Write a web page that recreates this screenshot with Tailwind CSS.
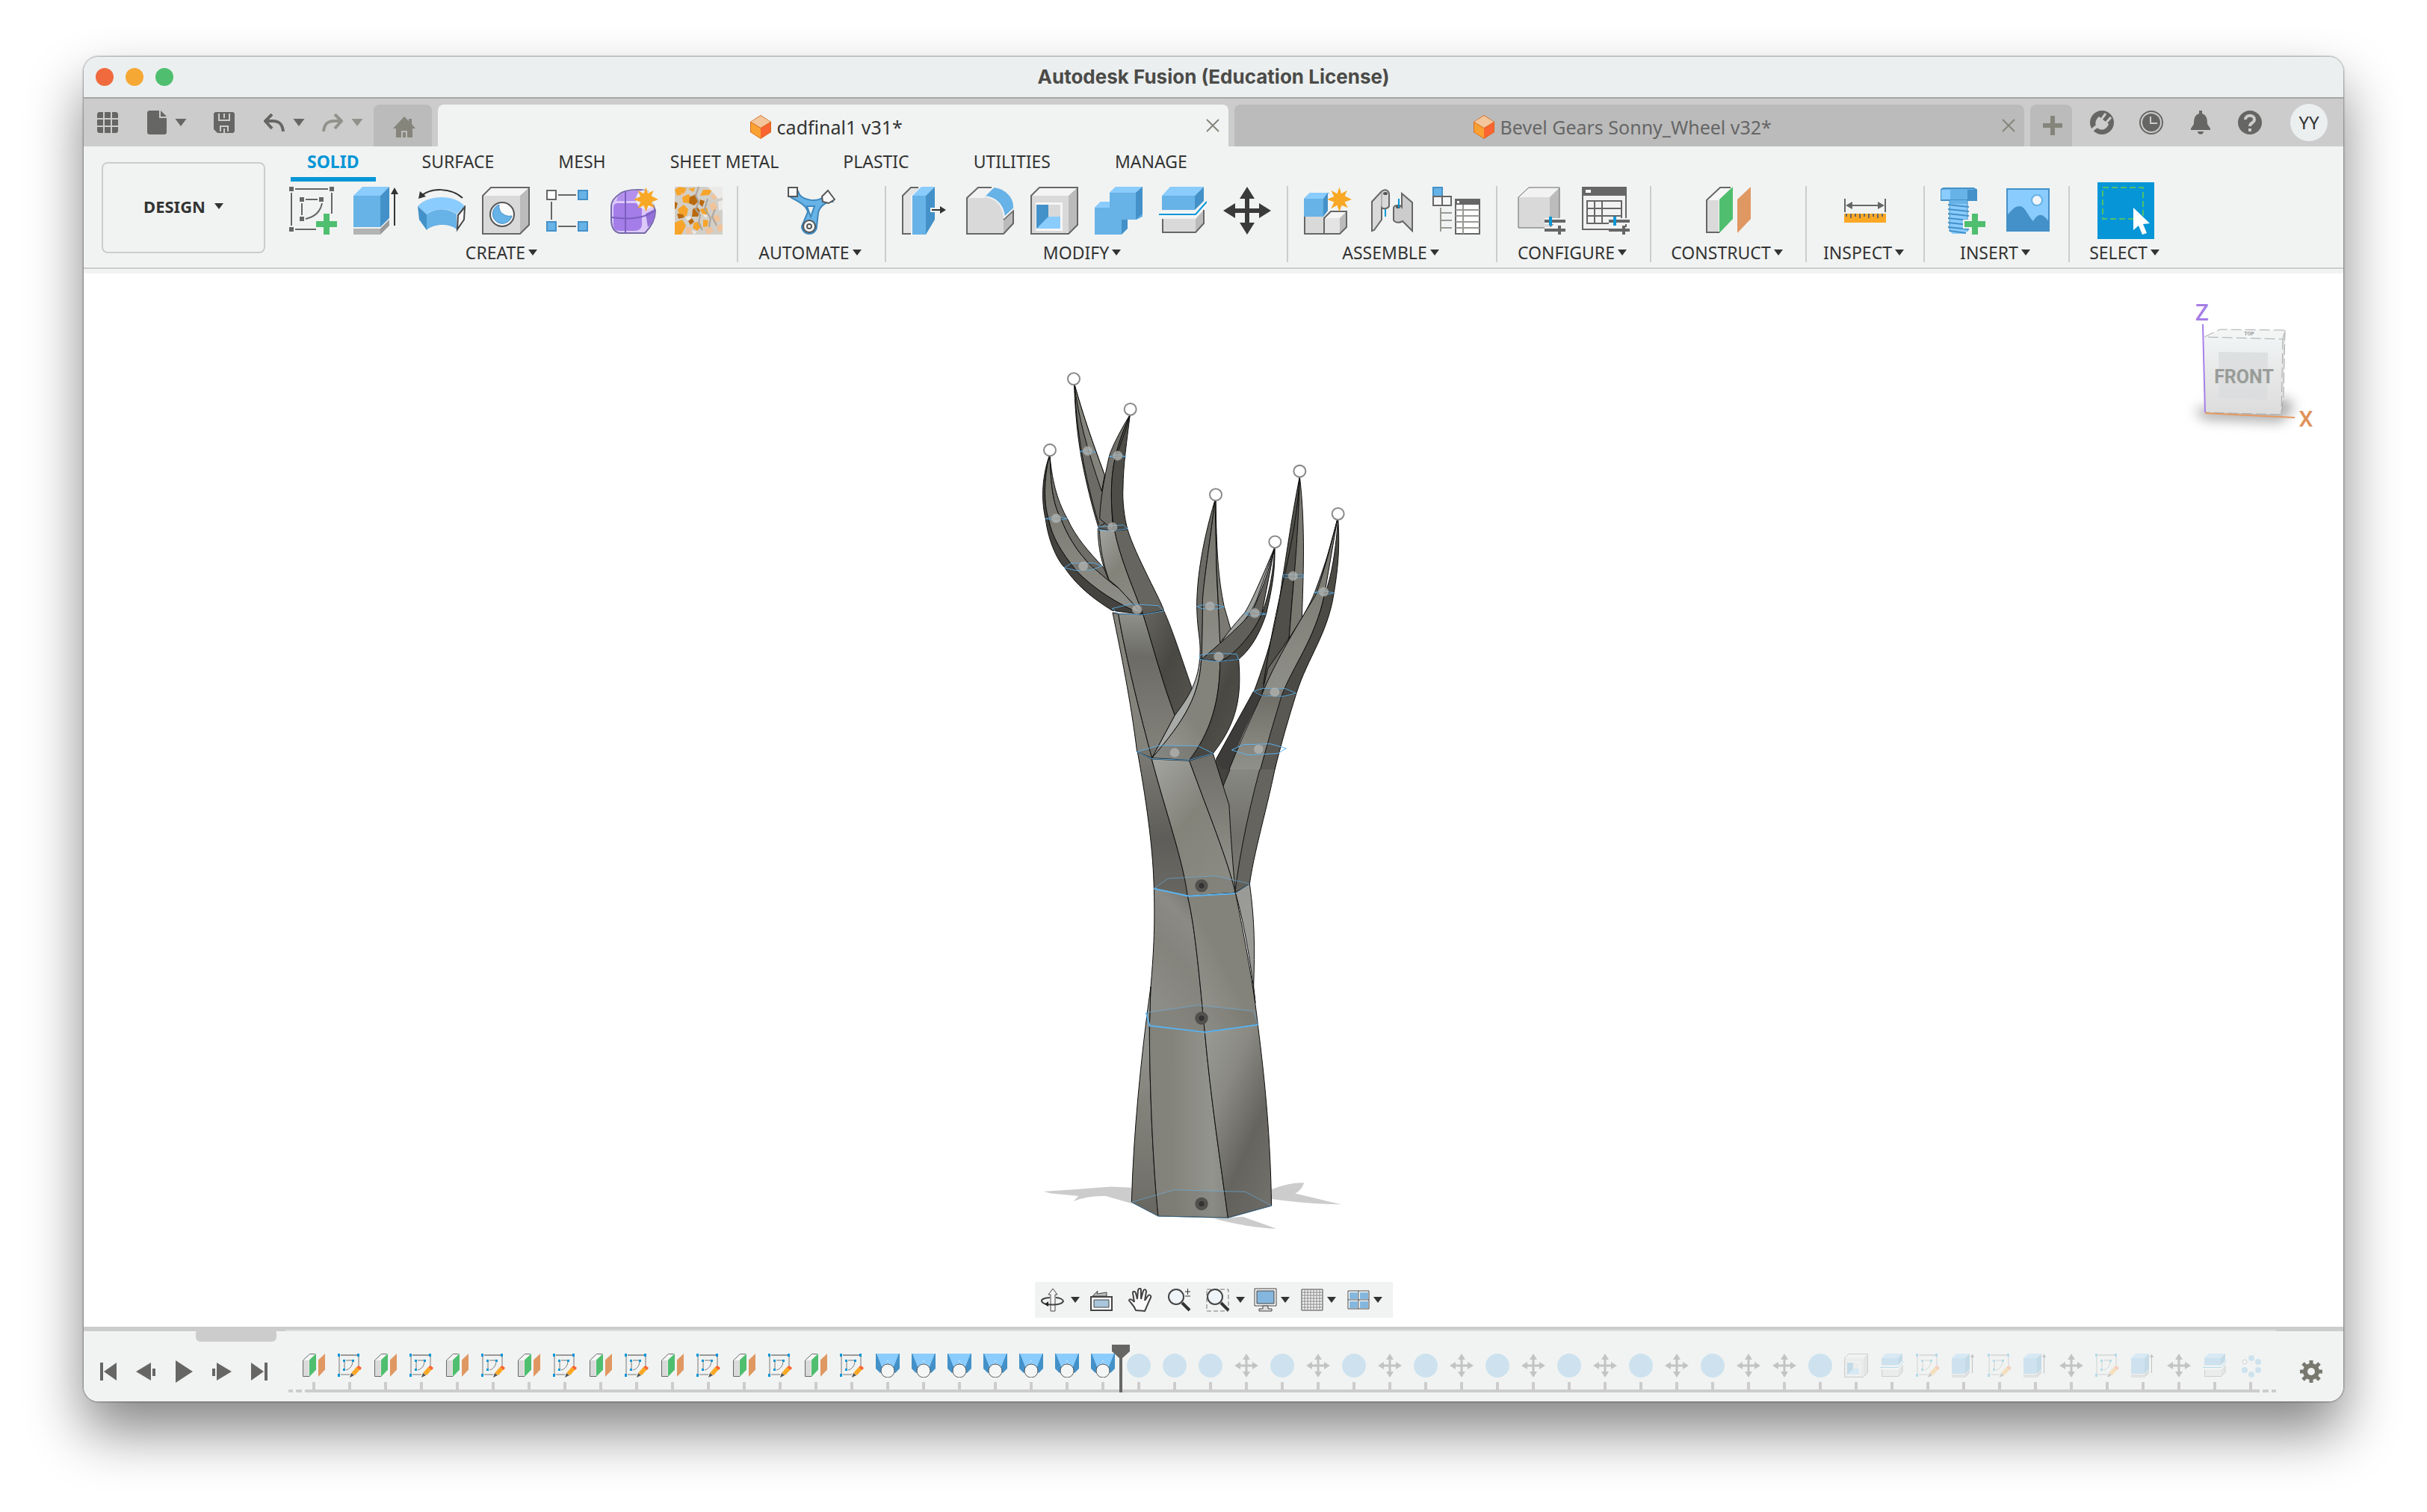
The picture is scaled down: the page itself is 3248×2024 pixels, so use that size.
<!DOCTYPE html>
<html lang="en">
<head>
<meta charset="utf-8">
<title>Autodesk Fusion (Education License)</title>
<script src="https://cdn.jsdelivr.net/npm/@tailwindcss/browser@4"></script>
</head>
<body class="min-h-screen bg-white flex flex-col pt-[76px] pb-[148px] px-28 font-['Noto_Sans','Open_Sans',sans-serif] text-[#333]">

<svg class="hidden" aria-hidden="true">
  <defs>
    <symbol id="caret" viewBox="0 0 12 8"><path d="M0 0h12L6 8z" fill="currentColor"/></symbol>
    <symbol id="star" viewBox="0 0 32 32"><path d="M16 0l2.500 8.500L26 4l-3 7.500 9 4.500-9 3.500L27 27l-8-3.500L16 32l-3-8.500L5 28l4-8.500-9-3.500 9-4L5 4l8 4.500z" fill="#f9a825"/></symbol>
    <symbol id="plus-badge" viewBox="0 0 28 28"><path d="M10 0h8v10h10v8H18v10h-8V18H0v-8h10z" fill="#4fbf6f"/></symbol>
    <symbol id="doc-cube" viewBox="0 0 28 32"><path d="M14 0l14 9v14l-14 9L0 23V9z" fill="#d86a1c"/><path d="M14 1l13 8-13 8L1 9z" fill="#f3c69c"/><path d="M1 10l13 8v13L1 23z" fill="#f9a133"/><path d="M27 10l-13 8v13l13-8z" fill="#fa6432"/></symbol>

    <symbol id="sketch" viewBox="0 0 64 64"><g fill="#666"><path d="M0 0h6v6H0zM54 0h6v6h-6zM0 54h6v6H0zM14 14h6v6h-6zM40 14h6v6h-6zM14 40h6v6h-6z"/></g><path d="M8 3h44M3 8v44M57 8v28M8 57h28M22 17h16M17 22v16M44 22c-2 10-8 18-22 21" fill="none" stroke="#666" stroke-width="2"/><use href="#plus-badge" x="36" y="36" width="28" height="28"/></symbol>
    <symbol id="extrude" viewBox="0 0 64 64"><path d="M0 12L12 0h36L36 12z" fill="#8accfd"/><path d="M0 12h36v42H0z" fill="#67b2e6"/><path d="M36 12L48 0v42L36 54z" fill="#4391c8"/><path d="M0 56h36v8H0z" fill="#b3b3b3"/><path d="M36 56l12-12v8L36 64z" fill="#999"/><path d="M55 6v46" stroke="#333" stroke-width="2"/><path d="M55 1l5 9H50z" fill="#333"/></symbol>
    <symbol id="revolve" viewBox="0 0 64 64"><path d="M0 26C14 10 50 10 63 26L52 37C44 28 22 28 12 37z" fill="#8accfd"/><path d="M12 37c12-9 28-9 40 0v20c-10-8-30-8-40 1z" fill="#67b2e6"/><path d="M0 26l12 11v21L2 44z" fill="#4391c8"/><path d="M63 27l-9 11-1 19 9-13z" fill="#f8f8f8" stroke="#444" stroke-width="2"/><path d="M60 15C44 1 18 1 5 12" fill="none" stroke="#333" stroke-width="2"/><path d="M1 16L3 6l8 7z" fill="#333"/></symbol>
    <symbol id="box" viewBox="0 0 64 64"><path d="M1 12L12 1h51L51 12z" fill="#f4f4f4"/><path d="M1 12h50v51H1z" fill="#d9d9d9"/><path d="M51 12L63 1v50L51 63z" fill="#bbb"/><path d="M1 12L12 1h51v50L51 63H1z" fill="none" stroke="#666" stroke-width="2"/></symbol>
    <symbol id="hole" viewBox="0 0 64 64"><use href="#box"/><circle cx="27" cy="37" r="16" fill="#fafafa" stroke="#555" stroke-width="2"/><path d="M23 24a13 13 0 1 0 17 15C31 41 21 34 23 24z" fill="#67b2e6" stroke="#4391c8"/></symbol>
    <symbol id="pattern" viewBox="0 0 64 64"><path d="M1 5h12v12H1z" fill="#fff" stroke="#666" stroke-width="2"/><path d="M43 5h12v12H43zM1 47h12v12H1zM43 47h12v12H43z" fill="#67b2e6" stroke="#4391c8" stroke-width="2"/><path d="M16 11h24M7 20v24M16 53h24" stroke="#666" stroke-width="2"/></symbol>
    <symbol id="form" viewBox="0 0 64 64"><path d="M13 9c9-6 30-6 38-3l9 26c0 14-8 24-14 30H12C4 60 1 54 1 44V26c0-7 6-13 12-17z" fill="#dcc9fa" stroke="#756aa8" stroke-width="2"/><path d="M10 12c8-6 20-8 28-7l-4 14H8z" fill="#b391ec"/><path d="M10 22h24c6 0 8 2 8 8v20c0 6-4 9-10 9H12c-6 0-8-3-8-9V28c0-4 2-6 6-6z" fill="#a47de8"/><path d="M47 36l12-6c1 12-2 18-9 24z" fill="#9471d8"/><path d="M20 6v56M2 41c20 3 44 2 57-9" fill="none" stroke="#7b5fc0" stroke-width="2"/><circle cx="47" cy="17" r="13" fill="#eff2f2" opacity=".8"/><use href="#star" x="31" y="0" width="33" height="34"/></symbol>
    <symbol id="texture" viewBox="0 0 64 64"><path d="M0 0h64v64H0z" fill="#d2cec8"/><path d="M0 4l6-4 10 2-4 8-9 2zM10 14l8-4 6 5-5 7-8-1zM34 12l4-8 12 0-4 7zM18 3l9-2-2 6zM4 30l8-6 6 6-2 9-9 2zM0 48l10-4 5 8-6 12H0zM34 30l9-2 2 8-7 3zM26 48l7-1 3 6-6 6-6-4zM38 44l7 1-1 8-6 1z" fill="#f6a52a"/><path d="M20 14l8-4 4 9-6 6-7-3zM24 30l6-3 4 5-3 8-8 0zM3 36l8 1 2 4-8 2zM34 17l6 2-3 8-4-4zM18 46l5-4 3 5-5 4zM0 20l4 2-2 7-2 1z" fill="#b9690e"/><path d="M46 24l7-4 4 8-6 6zM50 40l8-3 3 8-8 4zM40 56l8-3 4 7-8 4zM15 54l7 1 1 8h-8zM48 12l6-3 3 5-5 4zM56 52l8-2v9l-6 1zM8 8l6 1-3 4z" fill="#f0c39b"/><path d="M44 0h20v14l-6 2-5-6zM36 36l8 2-2 4zM58 20l6-2v12l-5 2zM22 58l8 2-4 4zM14 41l6-2 2 4-5 2z" fill="#eceae8"/><path d="M32 0l-4 12 4 8-4 10 6 8-2 10 5 10M44 16l-4 14 8 12-2 12M54 30l-4 10 6 12" fill="none" stroke="#aaa49c" stroke-width="2"/></symbol>

    <symbol id="automate" viewBox="0 0 64 64"><path d="M4 8l10-2c3 13 28 16 36 6l10 8c-9 0-17 6-19 15l-2 18a9 9 0 1 1-20 0L27 34C25 24 14 20 4 14z" fill="#67b2e6" stroke="#3e87bd" stroke-width="2"/><path d="M26 26h10l-5 14z" fill="#eff2f2" stroke="#3e87bd" stroke-width="2"/><path d="M1 1h12v12H1zM54 5l9 12-8 5-8-2-1-7z" fill="#f8f8f8" stroke="#555" stroke-width="2"/><circle cx="29" cy="53" r="8" fill="#f8f8f8" stroke="#555" stroke-width="2"/><circle cx="29" cy="53" r="3" fill="none" stroke="#555" stroke-width="2"/></symbol>

    <symbol id="presspull" viewBox="0 0 64 64"><path d="M1 12L12 1h12L12 12v51H1z" fill="#e4e4e4"/><path d="M12 63H1V12L12 1h10" fill="none" stroke="#666" stroke-width="2"/><path d="M14 12L26 0h18L32 12z" fill="#8accfd"/><path d="M14 12h18v52H14z" fill="#67b2e6"/><path d="M32 12L44 0v44L32 64z" fill="#4391c8"/><path d="M38 28h20v6H38z" fill="#eff2f2"/><path d="M40 31h14" stroke="#333" stroke-width="2"/><path d="M59 31l-8-5v10z" fill="#333"/></symbol>
    <symbol id="fillet" viewBox="0 0 64 64"><path d="M1 15L16 1h20L25 14C40 14 50 24 50 42l13-10v16L50 63H1z" fill="#d9d9d9"/><path d="M1 15L16 1h20L24 15z" fill="#f2f2f2"/><path d="M50 42l13-10v16L50 63z" fill="#bbb"/><path d="M50 44l13-12v17L50 63H1V15L16 1h18" fill="none" stroke="#666" stroke-width="2"/><path d="M37 0c18 2 28 16 27 29L51 41C50 24 39 14 24 13z" fill="#67b2e6" stroke="#eff2f2" stroke-width="2"/></symbol>
    <symbol id="shell" viewBox="0 0 64 64"><use href="#box"/><path d="M7 21h36v38H7z" fill="#f6f6f6"/><path d="M8 24h16v16h16v16H8z" fill="#67b2e6"/><path d="M24 40H40v16H8l16-16z" fill="#8accfd"/><path d="M8 24h16v16L8 56z" fill="#4391c8"/><path d="M24 24h16v16H24z" fill="#d9d9d9"/></symbol>
    <symbol id="combine" viewBox="0 0 64 64"><path d="M20 8l8-8h36v40L56 44H44L36 64H0V28l8-8h12z" fill="#67b2e6"/><path d="M20 8l8-8h36l-9 8zM0 28l8-8h12v8z" fill="#8accfd"/><path d="M55 8l9-8v36l-9 8zM36 44h8v12l-8 8z" fill="#4391c8"/></symbol>
    <symbol id="split" viewBox="0 0 64 64"><path d="M4 12L15 0h45L48 12z" fill="#8accfd"/><path d="M4 12h44v19H4z" fill="#67b2e6"/><path d="M48 12L60 0v19L48 31z" fill="#4391c8"/><path d="M5 43h44v18H5z" fill="#d9d9d9"/><path d="M49 43l11-12v18L49 61z" fill="#bbb"/><path d="M5 43v18h44l11-12V31" fill="none" stroke="#666" stroke-width="2"/><path d="M0 37h49l15-17" fill="none" stroke="#f6f6f6" stroke-width="7"/><path d="M0 37h49l15-17" fill="none" stroke="#0696d7" stroke-width="2"/></symbol>
    <symbol id="move" viewBox="0 0 64 64"><path d="M32 0l10 16h-7v13h13v-7l16 10-16 10v-7H35v13h7L32 64 22 48h7V35H16v7L0 32l16-10v7h13V16h-7z" fill="#3a3a3a"/></symbol>

    <symbol id="component" viewBox="0 0 64 64"><path d="M1 40h26v23H1z" fill="#d9d9d9"/><path d="M27 42l9-9h21L48 42v21H27z" fill="#e4e4e4"/><path d="M27 42l9-9h21l-9 9z" fill="#f6f6f6"/><path d="M48 42l9-9v21l-9 9z" fill="#bbb"/><path d="M1 40v23h47l9-9V33H36l-9 9v21" fill="none" stroke="#666" stroke-width="2"/><path d="M0 16l8-8h26l-8 8v24H0z" fill="#67b2e6"/><path d="M0 16l8-8h24l-6 8z" fill="#8accfd"/><path d="M26 16l6-8v24l-6 8z" fill="#4391c8"/><circle cx="48" cy="17" r="14" fill="#eff2f2"/><use href="#star" x="31" y="0" width="33" height="34"/></symbol>
    <symbol id="joint" viewBox="0 0 64 64"><path d="M5 20L18 6c6-4 10 0 10 4v16c-2 4-8 4-10 2v16L8 58l-3 1z" fill="#d9d9d9" stroke="#666" stroke-width="2"/><path d="M18 6v22" stroke="#888"/><ellipse cx="23" cy="9" rx="3" ry="2" fill="#555"/><path d="M45 9l14 12v38L46 46l-2 1c-4 2-10 0-10-3V28c1-4 9-4 11-1z" fill="#ccc" stroke="#666" stroke-width="2"/><ellipse cx="40" cy="27" rx="3" ry="2" fill="#555"/><path d="M23 30v10M41 16v12" stroke="#0696d7" stroke-width="2"/></symbol>
    <symbol id="bom" viewBox="0 0 64 64"><path d="M1 1h12v12H1z" fill="#67b2e6" stroke="#4391c8" stroke-width="2"/><path d="M1 13h24v12H1zM13 13v12" fill="#f6f6f6" stroke="#666" stroke-width="2"/><path d="M11 28v32M11 35h15M11 45h15M11 55h15" stroke="#999994" stroke-width="2" fill="none"/><path d="M31 17h32v46H31z" fill="#fff" stroke="#666" stroke-width="2"/><path d="M30 16h34v8H30z" fill="#666"/><path d="M33 19h3v3h-3z" fill="#fff"/><path d="M31 31h32M31 39h32M31 47h32M31 55h32M41 24v39" stroke="#999994" stroke-width="2"/></symbol>

    <symbol id="sliders" viewBox="0 0 28 24"><path d="M0 6h28M0 18h28" stroke="#eff2f2" stroke-width="8"/><path d="M0 6h28M0 18h28" stroke="#666" stroke-width="4"/><path d="M8 0v12" stroke="#0696d7" stroke-width="4"/><path d="M20 12v12" stroke="#666" stroke-width="4"/></symbol>
    <symbol id="config" viewBox="0 0 64 64"><path d="M1 14L15 1h41L43 14z" fill="#f2f2f2"/><path d="M1 14h42v41H1z" fill="#d9d9d9"/><path d="M43 14L56 1v40L43 55z" fill="#bbb"/><path d="M1 14L15 1h41v40L43 55H1z" fill="none" stroke="#666" stroke-width="1"/><use href="#sliders" x="36" y="40" width="28" height="24"/></symbol>
    <symbol id="config-table" viewBox="0 0 64 64"><path d="M1 1h58v56H1z" fill="#f2f2f2" stroke="#666" stroke-width="2"/><path d="M0 0h60v12H0z" fill="#666"/><path d="M5 4h7v4H5z" fill="#fff"/><path d="M7 19h46v30H7zM7 29h46M7 39h46M17 19v30M27 19v30" fill="none" stroke="#666" stroke-width="2"/><use href="#sliders" x="36" y="40" width="28" height="24"/></symbol>

    <symbol id="plane" viewBox="0 0 64 64"><path d="M3 18L21 1h14L19 18z" fill="#f6f6f6"/><path d="M3 18h16v43H3z" fill="#dadada"/><path d="M35 1H21L3 18v43h17" fill="none" stroke="#666" stroke-width="2"/><path d="M20 17L38 0v43L20 62z" fill="#4fbf6f"/><path d="M44 17L62 0v43L44 62z" fill="#e09862"/></symbol>
    <symbol id="measure" viewBox="0 0 64 64"><path d="M5 16v18M59 16v18M8 25h48" stroke="#666" stroke-width="2"/><path d="M6 25l9-5v10zM58 25l-9-5v10z" fill="#666"/><path d="M4 36h56v12H4z" fill="#f9a825"/><path d="M7 36v4M13 36v6M19 36v4M25 36v6M31 36v4M37 36v6M43 36v4M49 36v6M55 36v4" stroke="#666" stroke-width="2"/></symbol>
    <symbol id="bolt" viewBox="0 0 64 64"><path d="M0 4l4-2h40l4 2v14H0z" fill="#67b2e6" stroke="#4391c8" stroke-width="2"/><path d="M1 4h12v13H1z" fill="#8accfd"/><path d="M36 4h12v13H36z" fill="#4391c8"/><path d="M12 18h24v41l-4 4H16l-4-4z" fill="#8accfd"/><path d="M12 18h24v5H12z" fill="#67b2e6"/><path d="M10 24l28 3M10 30l28 3M10 36l28 3M10 42l28 3M10 48l28 3M10 54l28 3M12 59l22 3" stroke="#4391c8" stroke-width="2"/><path d="M12 18v42M36 18v42" stroke="#4391c8"/><path d="M40 34h12v10h10v12H52v8H40v-8H30V44h10z" fill="#eff2f2"/><use href="#plus-badge" x="32" y="36" width="28" height="28"/></symbol>
    <symbol id="picture" viewBox="0 0 64 64"><path d="M3 3h56v56H3z" fill="#8accfd"/><circle cx="43" cy="18" r="7" fill="#f2f6f8" stroke="#67b2e6" stroke-width="2"/><path d="M3 38c8-8 10-12 17-12s11 13 18 20c6-10 12-12 21 1v13H3z" fill="#4391c8"/><path d="M3 3h56v56H3z" fill="none" stroke="#4391c8" stroke-width="2"/></symbol>
    <symbol id="select" viewBox="0 0 76 76"><path d="M0 0h76v76H0z" fill="#0696d7"/><path d="M7 7h54v42H7z" fill="none" stroke="#4fbf6f" stroke-width="2" stroke-dasharray="8 4"/><path d="M48 34l22 21-9 1 5 12-6 2-5-12-7 6z" fill="#fff"/></symbol>

    <symbol id="sketch-edit" viewBox="0 0 32 32"><path d="M4 2h24M2 4v24M28 4v16M4 28h12M11 9h8M9 11v10M20 10c0 6-4 11-9 12" fill="none" stroke="#777" stroke-width="1"/><path d="M4 2h24" stroke="#999" stroke-width="2"/><path d="M0 0h3v4H0zM26 0h3v4h-3zM0 27h3v4H0zM7 8h3v3H7zM19 8h3v3h-3zM7 20h3v3H7z" fill="#0696d7"/><path d="M18 26l7-8 5 3-7 8z" fill="#f9a825"/><path d="M25 18l3-2 4 3-2 3z" fill="#fa6432"/><path d="M18 26l4 3-6 3z" fill="#555"/></symbol>
    <symbol id="loft" viewBox="0 0 32 32"><path d="M0 0h32v20l-6 6-10-11L6 26l-6-6z" fill="#4391c8"/><path d="M1 0h30l-8 20H9z" fill="#8accfd"/><path d="M16 9l-7 13M16 9l7 13" stroke="#c4e4fb" stroke-dasharray="2 2" stroke-width="1"/><circle cx="16" cy="23" r="9" fill="#f4f6f6" stroke="#555" stroke-width="1"/></symbol>
    <symbol id="sphere" viewBox="0 0 32 32"><circle cx="16" cy="16" r="16" fill="#67b2e6"/></symbol>
    <symbol id="circular" viewBox="0 0 32 32"><g fill="#67b2e6"><circle cx="17" cy="6" r="4"/><circle cx="26" cy="11" r="4"/><circle cx="26" cy="22" r="4"/><circle cx="17" cy="28" r="4"/><circle cx="8" cy="22" r="4"/></g><circle cx="8" cy="11" r="3" fill="#fff" stroke="#666" stroke-width="1"/></symbol>
  </defs>
</svg>

<div class="flex-1 flex flex-col rounded-[20px] overflow-hidden bg-white shadow-[0_0_2px_1px_rgba(0,0,0,0.35),0_40px_76px_rgba(0,0,0,0.48)]">

  <header class="h-14 shrink-0 bg-[#ebeff0] border-b-2 border-[#a5a5a5] grid grid-cols-[1fr_auto_1fr] items-center px-4">
    <div class="flex gap-4">
      <button aria-label="Close" class="size-6 rounded-full bg-[#f06a3e]"></button>
      <button aria-label="Minimize" class="size-6 rounded-full bg-[#f6a834]"></button>
      <button aria-label="Zoom" class="size-6 rounded-full bg-[#4fbf6f]"></button>
    </div>
    <h1 class="font-['Inter',sans-serif] font-bold text-[26px] leading-8 text-[#4b4b48]">Autodesk Fusion (Education License)</h1>
  </header>

  <div class="h-16 shrink-0 bg-[#ccc] flex items-stretch pt-2 pl-[18px] pr-[21px] text-[#666664]">
    <div class="w-[370px] shrink-0 flex items-center pb-2">
      <button aria-label="Data panel"><svg class="size-7" viewBox="0 0 28 28" fill="currentColor"><path d="M2 0h6v8H0V2zM10 0h8v8h-8zM20 0h6l2 2v6h-8zM0 10h8v8H0zM10 10h8v8h-8zM20 10h8v8h-8zM0 20h8v8H2l-2-2zM10 20h8v8h-8zM20 20h8v6l-2 2h-6z"/></svg></button>
      <button aria-label="File" class="ml-[39px] flex items-center gap-[11px]"><svg class="w-[26px] h-8" viewBox="0 0 26 32" fill="currentColor"><path d="M2 0h14v10h10v20l-2 2H2l-2-2V2zM18 0l8 8h-8z"/></svg><svg class="w-4 h-[10px]"><use href="#caret"/></svg></button>
      <button aria-label="Save" class="ml-9"><svg class="size-7" viewBox="0 0 28 28"><path d="M2 0h24l2 2v24l-2 2H5l-5-5V2z" fill="currentColor"/><path d="M7 2v9h14V2M9 26v-7h10v7" fill="none" stroke="#ccc" stroke-width="2"/><path d="M13 2h2v6h-2zM13 22h2v6h-2z" fill="#ccc"/></svg></button>
      <button aria-label="Undo" class="ml-[39px] flex items-center gap-[11px]"><svg class="w-7 h-6" viewBox="0 0 28 24"><path d="M11 1L2 10l9 10M3 10h9c9 0 13 4 14 14" fill="none" stroke="currentColor" stroke-width="4"/></svg><svg class="w-4 h-[10px]"><use href="#caret"/></svg></button>
      <button aria-label="Redo" class="ml-[23px] flex items-center gap-[11px] text-[#92928c]"><svg class="w-7 h-6" viewBox="0 0 28 24"><path d="M17 1l9 9-9 10M25 10h-9C7 10 3 14 2 24" fill="none" stroke="currentColor" stroke-width="4"/></svg><svg class="w-4 h-[10px]"><use href="#caret"/></svg></button>
    </div>
    <nav class="flex-1 flex gap-2" aria-label="Documents">
      <button aria-label="Home" class="w-[78px] shrink-0 rounded-t-lg bg-[#bbb] text-[#85857c] flex items-center justify-center pt-1 pl-1"><svg class="w-[30px] h-7" viewBox="0 0 30 28" fill="currentColor"><path d="M15 0l6 6V3h4v7l5 6h-4v12h-7v-9h-8v9H4V16H0zM13 21h4v7h-4z"/></svg></button>
      <div class="flex-1 rounded-t-lg bg-[#f1f3f2] flex items-center pr-3">
        <button class="flex-1 flex items-center justify-center gap-2 pt-1 text-[25px] leading-8 text-[#333] pl-3"><svg class="w-7 h-8"><use href="#doc-cube"/></svg>cadfinal1 v31*</button>
        <button aria-label="Close tab"><svg class="size-[18px]" viewBox="0 0 18 18"><path d="M1 1l16 16M17 1L1 17" stroke="#85857c" stroke-width="2"/></svg></button>
      </div>
      <div class="flex-1 rounded-t-lg bg-[#bbb] flex items-center pr-3">
        <button class="flex-1 flex items-center justify-center gap-2 pt-1 text-[25px] leading-8 text-[#666] pl-3"><svg class="w-7 h-8"><use href="#doc-cube"/></svg>Bevel Gears Sonny_Wheel v32*</button>
        <button aria-label="Close tab"><svg class="size-[18px]" viewBox="0 0 18 18"><path d="M1 1l16 16M17 1L1 17" stroke="#85857c" stroke-width="2"/></svg></button>
      </div>
      <button aria-label="New tab" class="w-14 shrink-0 rounded-t-lg bg-[#bbb] flex items-center justify-center pl-1"><svg class="size-[26px]" viewBox="0 0 26 26"><path d="M13 0v26M0 13h26" stroke="#85857c" stroke-width="6"/></svg></button>
    </nav>
    <div class="shrink-0 flex items-center gap-[34px] pl-6 pb-2">
      <button aria-label="Extensions"><svg class="size-8" viewBox="0 0 32 32"><circle cx="16" cy="16" r="16" fill="currentColor"/><path d="M12 8l13 10c-2 6-8 10-14 6-6-4-4-12 1-16z" fill="#ccc"/><path d="M15 12l6-8M21 17l7-8" stroke="#ccc" stroke-width="3"/><path d="M11 21C6 22 3 25 1 31" fill="none" stroke="#ccc" stroke-width="4"/></svg></button>
      <button aria-label="Job status"><svg class="size-8" viewBox="0 0 32 32"><circle cx="16" cy="16" r="15" fill="none" stroke="currentColor" stroke-width="2"/><circle cx="16" cy="16" r="12" fill="currentColor"/><path d="M15 8v9h9" fill="none" stroke="#ccc" stroke-width="2"/></svg></button>
      <button aria-label="Notifications"><svg class="size-8" viewBox="0 0 32 32" fill="currentColor"><path d="M14 0h4v4c6 2 7 7 7 14l4 6v2H3v-2l4-6c0-7 1-12 7-14zM12 28h8c0 5-8 5-8 0z"/></svg></button>
      <button aria-label="Help"><svg class="size-8" viewBox="0 0 32 32"><circle cx="16" cy="16" r="16" fill="currentColor"/><path d="M10 12c0-7 12-7 12 0 0 5-6 4-6 9" fill="none" stroke="#ccc" stroke-width="4"/><path d="M14 24h4v4h-4z" fill="#ccc"/></svg></button>
      <button class="size-[50px] -my-1 ml-1 rounded-full bg-[#ebeff0] text-2xl leading-6 text-[#333]">YY</button>
    </div>
  </div>

  <div class="h-[162px] shrink-0 bg-[#f1f3f2] flex pl-6 pt-[21px]">
    <button class="w-[219px] h-[122px] shrink-0 rounded-lg border-2 border-[#ccc] flex items-center justify-center gap-3 pb-1 font-bold text-[22px] leading-6">DESIGN<svg class="w-3 h-2"><use href="#caret"/></svg></button>
    <div class="flex-1 min-w-0 flex flex-col -mt-[15px] pl-[13px]">
      <nav class="h-[41px] flex items-start gap-[38px] pl-[21px] text-[23px] leading-6" aria-label="Workspace">
        <a href="#" class="h-[41px] pt-[2px] px-[22px] border-b-6 border-[#0696d7] text-[#0696d7] font-bold">SOLID</a>
        <a href="#" class="pt-[2px] px-6">SURFACE</a>
        <a href="#" class="pt-[2px] px-6">MESH</a>
        <a href="#" class="pt-[2px] px-6">SHEET METAL</a>
        <a href="#" class="pt-[2px] px-6">PLASTIC</a>
        <a href="#" class="pt-[2px] px-6">UTILITIES</a>
        <a href="#" class="pt-[2px] px-6">MANAGE</a>
      </nav>
      <div id="ribbon" class="h-[102px] mt-[6px] flex text-[23px]"></div>
    </div>
  </div>
  <div class="h-2 shrink-0 bg-[#f1f3f2] border-t-2 border-[#ccc]"></div>

  <main class="flex-1 relative bg-white flex flex-col items-center pt-[114px]">
    <svg class="w-[500px] h-[1180px] shrink-0" viewBox="1374 480 500 1180" role="img" aria-label="Tree model">
      <defs>
        <linearGradient id="g1" x1="0" y1="0" x2="0" y2="1"><stop offset="0" stop-color="#7b7a74"/><stop offset=".6" stop-color="#5e5d59"/><stop offset="1" stop-color="#6b6a65"/></linearGradient>
        <linearGradient id="g2" x1="0" y1="0" x2=".7" y2="1"><stop offset="0" stop-color="#a3a5a1"/><stop offset=".5" stop-color="#84837a"/><stop offset="1" stop-color="#8b8a83"/></linearGradient>
        <linearGradient id="g3" x1="0" y1="0" x2="0" y2="1"><stop offset="0" stop-color="#6e6d67"/><stop offset="1" stop-color="#96978f"/></linearGradient>
        <linearGradient id="g4" x1="1" y1="0" x2=".6" y2="1"><stop offset="0" stop-color="#6b6a65"/><stop offset=".3" stop-color="#8b8a85"/><stop offset=".6" stop-color="#84837c"/><stop offset="1" stop-color="#8d8d87"/></linearGradient>
        <linearGradient id="g5" x1="1" y1="0" x2="0" y2="1"><stop offset="0" stop-color="#84837a"/><stop offset=".5" stop-color="#84837b"/><stop offset="1" stop-color="#9a9c96"/></linearGradient>
        <linearGradient id="g6" x1="0" y1="0" x2="1" y2="0"><stop offset="0" stop-color="#83827a"/><stop offset=".3" stop-color="#85847c"/><stop offset=".8" stop-color="#93948e"/><stop offset="1" stop-color="#8a8983"/></linearGradient>
        <linearGradient id="g7" x1="0" y1="0" x2=".8" y2="1"><stop offset="0" stop-color="#9a9b96"/><stop offset=".35" stop-color="#8a8a83"/><stop offset=".7" stop-color="#65645f"/><stop offset="1" stop-color="#706f6a"/></linearGradient>
        <linearGradient id="g8" x1="0" y1="0" x2="0" y2="1"><stop offset="0" stop-color="#a0a2a0"/><stop offset=".5" stop-color="#84837b"/><stop offset="1" stop-color="#6c6b65"/></linearGradient>
        <linearGradient id="g9" x1="0" y1="0" x2="0" y2="1"><stop offset="0" stop-color="#8f908a"/><stop offset=".3" stop-color="#6c6b66"/><stop offset="1" stop-color="#84837b"/></linearGradient>
        <linearGradient id="g10" x1="0" y1="0" x2="1" y2="1"><stop offset="0" stop-color="#66655f"/><stop offset=".5" stop-color="#494843"/><stop offset="1" stop-color="#55544f"/></linearGradient>
        <linearGradient id="g11" x1="0" y1="0" x2="0" y2="1"><stop offset="0" stop-color="#6f6e67"/><stop offset=".6" stop-color="#85847c"/><stop offset="1" stop-color="#8f908a"/></linearGradient>
        <linearGradient id="g12" x1="0" y1="0" x2="0" y2="1"><stop offset="0" stop-color="#8f908a"/><stop offset=".6" stop-color="#71706a"/><stop offset="1" stop-color="#7b7a74"/></linearGradient>
      </defs>
      <g transform="translate(1380 1000) scale(.33333 .43367)" stroke="#0c0c0c" stroke-width="1" stroke-linejoin="round">
        <path stroke="none" fill="#ccc" d="M50 1372Q180 1366 320 1357L403 1360V1409L300 1386Q230 1384 170 1402L190 1386 80 1378zM965 1365Q1040 1343 1095 1345 1090 1365 1060 1378L1245 1412Q1100 1410 965 1395zM735 1456L850 1450 985 1487Q880 1484 735 1456z"/>
        <path stroke="none" fill="#44433f" d="M775 0L737 45 770 122 835 0z"/>
        <path stroke="none" fill="url(#g12)" d="M835 0L770 122 795 180Q804 330 818 450 850 250 942 0z"/>
        <path stroke="none" fill="#65645f" d="M942 0Q850 250 818 450L877 422C900 300 960 160 995 0z"/>
        <path vector-effect="non-scaling-stroke" fill="none" d="M737 45L770 122 835 0M942 0Q850 250 818 450L877 422C900 300 960 160 995 0"/>
        <path vector-effect="non-scaling-stroke" fill="url(#g1)" d="M427 15C470 200 490 330 493 437L628 460C610 350 540 200 484 37z"/>
        <path vector-effect="non-scaling-stroke" fill="url(#g2)" d="M484 37C540 200 610 350 628 460L820 450C790 350 710 200 635 42z"/>
        <path vector-effect="non-scaling-stroke" fill="url(#g3)" d="M635 42C710 200 790 350 820 450 806 330 800 260 795 180L730 20z"/>
        <path stroke="none" fill="url(#g4)" d="M493 437C498 560 490 650 480 740L475 860 697 880C680 750 660 560 628 460z"/>
        <path vector-effect="non-scaling-stroke" fill="none" d="M493 437C498 560 490 650 480 740L475 860M628 460C660 560 680 750 697 880"/>
        <path vector-effect="non-scaling-stroke" fill="#9a9b96" d="M820 450L877 422C898 540 898 620 893 740L900 790C880 650 850 530 820 450z"/>
        <path vector-effect="non-scaling-stroke" fill="url(#g5)" d="M628 460L820 450C860 600 895 750 910 857L697 880C680 750 660 560 628 460z"/>
        <path vector-effect="non-scaling-stroke" fill="url(#g8)" d="M480 740C440 960 410 1200 403 1405L510 1448C490 1300 475 1060 475 860z"/>
        <path vector-effect="non-scaling-stroke" fill="url(#g6)" d="M475 860C475 1060 490 1300 510 1448L790 1453C760 1280 720 1080 697 880z"/>
        <path vector-effect="non-scaling-stroke" fill="url(#g7)" d="M697 880C720 1080 760 1280 790 1453L965 1416C960 1200 940 1040 910 857z"/>
        <g fill="#4a4944" fill-opacity=".12" stroke="#66b3ea" stroke-opacity=".6">
          <path vector-effect="non-scaling-stroke" d="M493 437L550 406 740 398 877 422 818 452 632 460z"/>
          <path vector-effect="non-scaling-stroke" d="M462 820L670 797 893 815 910 857 697 880 475 860z"/>
          <path vector-effect="non-scaling-stroke" d="M403 1405L575 1367 860 1373 965 1416 790 1454 510 1448z"/>
        </g>
        <path vector-effect="non-scaling-stroke" fill="none" stroke="#5cb4f0" stroke-width="2" d="M493 437L632 460 818 452M462 820L475 860 697 880 910 857"/>
        <g stroke="none" fill="#51504d"><ellipse cx="684" cy="428" rx="26" ry="20"/><ellipse cx="684" cy="837" rx="26" ry="20"/><ellipse cx="684" cy="1410" rx="26" ry="20"/></g>
        <g stroke="#83827c" fill="#333"><ellipse cx="684" cy="428" rx="13" ry="10"/><ellipse cx="684" cy="837" rx="13" ry="10"/><ellipse cx="684" cy="1410" rx="13" ry="10"/></g>
      </g>
      <g transform="translate(1340 470) scale(.33333 .35714)" stroke="#0c0c0c" stroke-width="1" stroke-linejoin="round">
        <path stroke="none" fill="#6c6b66" d="M388 668L392 600 440 600 460 673z"/>
        <path vector-effect="non-scaling-stroke" fill="#6c6b66" d="M293 122C296 220 305 330 330 440 350 530 370 600 390 660L425 640 415 465C390 400 340 280 293 122z"/>
        <path vector-effect="non-scaling-stroke" fill="#85847c" d="M293 122C310 250 345 370 403 525L415 465C390 400 340 280 293 122z"/>
        <path vector-effect="non-scaling-stroke" fill="none" d="M293 125C304 300 330 460 392 650"/>
        <path vector-effect="non-scaling-stroke" fill="#706f6a" d="M517 238C470 310 440 370 433 395 410 490 398 560 395 628L450 672C444 620 440 560 443 500 447 400 480 320 517 238z"/>
        <path vector-effect="non-scaling-stroke" fill="#4e4d48" d="M517 238C480 320 447 400 443 500 440 560 444 620 455 673L507 668C495 630 485 560 489 510 489 430 505 330 517 238z"/>
        <path vector-effect="non-scaling-stroke" fill="none" d="M517 238C495 320 475 350 465 390"/>
        <path vector-effect="non-scaling-stroke" fill="#44433f" d="M193 392C160 480 162 570 178 630 190 720 230 790 255 812 310 890 390 940 445 972L570 988C470 950 370 890 300 822 240 750 205 700 190 630 170 570 170 480 193 392z"/>
        <path vector-effect="non-scaling-stroke" fill="url(#g11)" d="M193 392C170 480 170 570 190 630 205 700 240 750 300 822 370 890 470 950 570 988L470 887C440 870 400 835 365 808 300 750 260 680 240 628 205 570 200 500 195 392z"/>
        <path vector-effect="non-scaling-stroke" fill="#6e6d67" d="M195 392C200 500 205 570 240 628 260 680 300 750 365 808 400 835 440 870 470 887L404 805C350 750 300 700 265 628 230 570 205 500 195 392z"/>
        <path vector-effect="non-scaling-stroke" fill="url(#g2)" d="M388 665C388 740 405 800 430 855L470 887 570 988C530 890 475 770 455 673z"/>
        <path vector-effect="non-scaling-stroke" fill="none" d="M394 668C396 740 410 800 432 856"/>
        <path vector-effect="non-scaling-stroke" fill="#66655f" d="M455 673L507 668C535 760 650 950 652 972L570 988C530 890 475 770 455 673z"/>
        <path vector-effect="non-scaling-stroke" fill="#84837b" d="M447 980L470 985C500 1150 560 1370 605 1525L545 1502C520 1310 480 1130 447 980z"/>
        <path vector-effect="non-scaling-stroke" fill="url(#g9)" d="M470 985L570 988C610 1110 650 1250 697 1365L605 1525C560 1370 500 1150 470 985z"/>
        <path vector-effect="non-scaling-stroke" fill="url(#g10)" d="M570 988L652 972C690 1050 730 1170 772 1280L740 1360 697 1365C650 1250 610 1110 570 988z"/>

        <path vector-effect="non-scaling-stroke" fill="#6b6a65" d="M858 558C800 740 785 870 785 957 787 1060 803 1080 797 1150L805 1155 810 955C805 900 835 740 858 558z"/>
        <path vector-effect="non-scaling-stroke" fill="url(#g11)" d="M858 558C835 740 805 900 808 960 808 1040 805 1100 805 1155L880 1095 865 850z"/>
        <path vector-effect="non-scaling-stroke" fill="#7a7972" d="M861 558C864 740 870 850 895 958L922 1045 878 1092 864 800z"/>
        <path vector-effect="non-scaling-stroke" fill="#9d9f9b" d="M1098 735C1050 840 1010 930 978 980 930 1030 900 1065 885 1090L870 1110C940 1060 1010 980 1030 920z"/>
        <path vector-effect="non-scaling-stroke" fill="#605f5a" d="M1098 735C1070 840 1020 960 1000 985 950 1040 860 1110 805 1155L878 1163 905 1150C950 1120 1010 1060 1045 988z"/>
        <path vector-effect="non-scaling-stroke" fill="#484742" d="M1098 735C1090 880 1050 975 1045 988 1010 1060 950 1120 905 1150L878 1163 953 1155C1010 1110 1040 1050 1063 987 1085 900 1100 830 1098 735z"/>
        <path vector-effect="non-scaling-stroke" fill="#a8aaa7" d="M797 1150C790 1250 740 1310 697 1365L605 1525C740 1380 795 1290 803 1155z"/>
        <path vector-effect="non-scaling-stroke" fill="url(#g5)" d="M803 1155C795 1290 740 1380 605 1525L755 1533C840 1430 878 1310 878 1163z"/>
        <path vector-effect="non-scaling-stroke" fill="url(#g10)" d="M878 1163C878 1310 840 1430 755 1533L850 1508C950 1390 965 1290 953 1155z"/>

        <path vector-effect="non-scaling-stroke" fill="#504f4a" d="M1198 470C1160 650 1140 800 1130 845 1105 1020 1080 1110 1015 1275L1050 1292 1070 1250 1155 1080 1175 850C1190 750 1195 600 1198 470z"/>
        <path vector-effect="non-scaling-stroke" fill="#797871" d="M1198 470C1195 600 1185 750 1175 850L1155 1080 1207 1000C1212 850 1222 660 1198 470z"/>
        <path vector-effect="non-scaling-stroke" fill="none" d="M1198 470C1185 700 1120 880 1075 1120L1052 1250"/>
        <path vector-effect="non-scaling-stroke" fill="#6d6c66" d="M1350 628C1320 750 1280 850 1258 905 1220 1000 1100 1150 1070 1190L1045 1290C1110 1140 1220 1000 1270 905z"/>
        <path vector-effect="non-scaling-stroke" fill="url(#g11)" d="M1350 628C1310 780 1280 870 1262 915 1200 1010 1100 1160 1045 1290L1130 1295C1170 1180 1260 1080 1297 915z"/>
        <path vector-effect="non-scaling-stroke" fill="#4b4a45" d="M1352 628C1340 780 1320 860 1297 915 1260 1080 1170 1180 1125 1293L1185 1282C1230 1150 1310 1060 1335 910 1345 850 1362 760 1352 628z"/>
        <path stroke="none" fill="#3d3c3a" d="M1013 1275L862 1530 885 1568H915C960 1450 1000 1380 1045 1290z"/>
        <path stroke="none" fill="url(#g11)" d="M1045 1290Q965 1450 915 1568H1040Q1080 1430 1125 1293z"/>
        <path stroke="none" fill="#595853" d="M1125 1293Q1080 1430 1040 1568H1098Q1135 1430 1185 1282z"/>
        <path vector-effect="non-scaling-stroke" fill="none" d="M1013 1275L862 1530M1045 1290Q965 1450 915 1568M1125 1293Q1080 1430 1040 1568M1185 1282Q1135 1430 1098 1568"/>
        <g fill="#333" fill-opacity=".18" stroke="#5cb4f0" stroke-opacity=".85" stroke-width="1">
          <path vector-effect="non-scaling-stroke" d="M316 376L350 368 378 378 350 384z"/>
          <path vector-effect="non-scaling-stroke" d="M433 395L470 388 500 395 468 400z"/>
          <path vector-effect="non-scaling-stroke" d="M178 628L225 620 265 627 225 636z"/>
          <path vector-effect="non-scaling-stroke" d="M388 658L490 652 507 666 440 674 392 670z"/>
          <path vector-effect="non-scaling-stroke" d="M253 812L280 796 370 794 404 805 365 820 300 822z"/>
          <path vector-effect="non-scaling-stroke" d="M445 965L520 948 630 954 652 974 570 988 470 985z"/>
          <path vector-effect="non-scaling-stroke" d="M785 957L838 946 895 958 865 966 805 965z"/>
          <path vector-effect="non-scaling-stroke" d="M976 983L1010 974 1063 986 1000 992z"/>
          <path vector-effect="non-scaling-stroke" d="M1132 838H1212V847L1175 852 1132 847z"/>
          <path vector-effect="non-scaling-stroke" d="M1256 904L1290 898 1336 906 1300 914z"/>
          <path vector-effect="non-scaling-stroke" d="M797 1140L850 1132 945 1136 953 1155 870 1164 797 1155z"/>
          <path vector-effect="non-scaling-stroke" d="M1013 1275L1050 1264 1140 1265 1183 1282 1130 1294 1045 1291z"/>
          <path vector-effect="non-scaling-stroke" d="M545 1502L635 1478 790 1480 850 1508 755 1533 605 1528z"/>
        </g>
        <path vector-effect="non-scaling-stroke" fill="none" stroke="#5cb4f0" d="M925 1495L970 1475 1080 1472 1144 1489 1110 1508 990 1514z"/>
        <g fill="#b4b5b2" fill-opacity=".75" stroke="#777">
          <ellipse cx="347" cy="374" rx="20" ry="18"/><ellipse cx="467" cy="392" rx="20" ry="18"/><ellipse cx="220" cy="627" rx="20" ry="18"/><ellipse cx="446" cy="660" rx="20" ry="18"/><ellipse cx="329" cy="806" rx="20" ry="18"/><ellipse cx="545" cy="968" rx="20" ry="18"/><ellipse cx="838" cy="956" rx="20" ry="18"/><ellipse cx="1018" cy="982" rx="20" ry="18"/><ellipse cx="1171" cy="843" rx="20" ry="18"/><ellipse cx="1294" cy="902" rx="20" ry="18"/><ellipse cx="873" cy="1145" rx="20" ry="18"/><ellipse cx="1098" cy="1278" rx="20" ry="18"/><ellipse cx="696" cy="1505" rx="20" ry="18"/><ellipse cx="1033" cy="1492" rx="20" ry="18"/>
        </g>
        <g fill="#fff" stroke="#8a8a8a" stroke-width="6">
          <ellipse cx="291" cy="104" rx="24" ry="22"/><ellipse cx="518" cy="218" rx="24" ry="22"/><ellipse cx="195" cy="371" rx="24" ry="22"/><ellipse cx="861" cy="538" rx="24" ry="22"/><ellipse cx="1198" cy="450" rx="24" ry="22"/><ellipse cx="1099" cy="715" rx="24" ry="22"/><ellipse cx="1352" cy="610" rx="24" ry="22"/>
        </g>
      </g>
    </svg>

    <svg class="absolute top-[14px] right-[16px] w-[220px] h-[200px]" viewBox="2900 380 220 200" role="img" aria-label="View cube">
      <defs>
        <filter id="soft" x="-30%" y="-80%" width="160%" height="260%"><feGaussianBlur stdDeviation="8"/></filter>
        <linearGradient id="face" x1="0" y1="0" x2="0" y2="1"><stop offset="0" stop-color="#f1f4f6"/><stop offset=".5" stop-color="#e6e7e6"/><stop offset="1" stop-color="#dcdcdc"/></linearGradient>
      </defs>
      <path d="M2935 548L3060 532 3072 545 3052 566 2950 562z" fill="#999" opacity=".75" filter="url(#soft)"/>
      <path d="M2950 451L2971 441 3058 442 3055 454z" fill="#f3f5f5"/><path d="M3055 454L3058 442 3056 530 3053 555z" fill="#e0e0e0"/>
      <path d="M2950 451L3055 454 3053 555 2951 552z" fill="url(#face)"/>
      <path d="M2969 471L3035 472 3034 535 2970 533z" fill="#dadcdd" opacity=".8"/>
      <path d="M2950 451L2971 441 3058 442 3055 454zM3058 442L3056 530 3053 555 2951 552M3055 454L3053 555" fill="none" stroke="#aaa" stroke-dasharray="14 5"/>
      <text x="3010" y="449" text-anchor="middle" font-family="Roboto, sans-serif" font-weight="700" font-size="7" fill="#999">TOP</text>
      <path d="M2948 434L2951 552" stroke="#a57ee8" stroke-width="2"/><path d="M2951 553L3071 559" stroke="#e79a62" stroke-width="2"/>
      <text x="3003" y="513" text-anchor="middle" font-family="Roboto, sans-serif" font-weight="700" font-size="25" fill="#999c98">FRONT</text>
      <text x="2947" y="429" text-anchor="middle" font-family="'Open Sans', sans-serif" font-weight="600" font-size="31" fill="#a57ee8">Z</text>
      <text x="3086" y="571" text-anchor="middle" font-family="Roboto, sans-serif" font-weight="500" font-size="30" fill="#e0925a">X</text>
    </svg>

    <div class="mt-auto mb-3 h-12 bg-[#f1f3f2] flex items-center pl-2 pr-[14px] text-[#333]" role="toolbar" aria-label="Navigation">
      <button aria-label="Orbit" class="flex items-center gap-2 mr-[13px]"><svg class="size-8" viewBox="0 0 32 32"><path d="M13 31V9H10l6-8 6 8h-3v22z" fill="#f4f4f4" stroke="#444" stroke-width="1"/><path d="M12 13c-8 0-12 3-11 5 3 6 26 6 29 0 0-2-4-5-10-5" fill="none" stroke="#444" stroke-width="2"/><path d="M5 22l5-4v7z" fill="#222"/></svg><svg class="w-3 h-2"><use href="#caret"/></svg></button>
      <button aria-label="Look at" class="mr-5"><svg class="size-8" viewBox="0 0 32 32"><path d="M2 12h28v18H2z" fill="#fff" stroke="#444" stroke-width="2"/><path d="M6 16h20v10H6z" fill="#a9c6dc" stroke="#444"/><path d="M4 11L11 4l-1 4 13-2v5z" fill="#bbb" stroke="#444"/></svg></button>
      <button aria-label="Pan" class="mr-5"><svg class="size-8" viewBox="0 0 32 32"><path d="M10 30C8 24 5 22 1 17c0-3 4-2 7 2L6 7c0-3 3-3 4 0l2 8 1-12c1-3 4-3 4 0v12l3-11c1-3 4-2 4 1l-2 12 4-6c2-3 5-1 4 2-4 8-6 14-8 18z" fill="#fafafa" stroke="#444" stroke-width="2"/></svg></button>
      <button aria-label="Zoom" class="mr-5"><svg class="size-8" viewBox="0 0 32 32"><path d="M20 20l10 10" stroke="#333" stroke-width="4"/><circle cx="12" cy="12" r="10" fill="#eef4f8" stroke="#444" stroke-width="2"/><path d="M24 5h7M27.500 1v8M24 11h7" stroke="#333" stroke-width="1"/></svg></button>
      <button aria-label="Fit" class="flex items-center gap-2 mr-3"><svg class="size-8" viewBox="0 0 32 32"><path d="M1 2h29v29H1z" fill="none" stroke="#777" stroke-dasharray="6 3"/><path d="M20 20l10 10" stroke="#333" stroke-width="4"/><circle cx="12" cy="12" r="10" fill="#eef4f8" stroke="#444" stroke-width="2"/></svg><svg class="w-3 h-2"><use href="#caret"/></svg></button>
      <button aria-label="Display settings" class="flex items-center gap-1 mr-[14px]"><svg class="size-8" viewBox="0 0 32 32"><path d="M1 1h29v23H1z" fill="#f4f4f4" stroke="#444" stroke-width="1"/><path d="M4 4h23v17H4z" fill="#85b7de" stroke="#444"/><path d="M12 24h7v4h5v3H7v-3h5z" fill="#ddd" stroke="#444"/></svg><svg class="w-3 h-2"><use href="#caret"/></svg></button>
      <button aria-label="Grid" class="flex items-center gap-1 mr-[14px]"><svg class="size-8" viewBox="0 0 32 32"><path d="M2 2h28v28H2z" fill="#f4f4f4" stroke="#444" stroke-width="1"/><path d="M2 6h28M2 10h28M2 14h28M2 18h28M2 22h28M2 26h28M6 2v28M10 2v28M14 2v28M18 2v28M22 2v28M26 2v28" stroke="#888"/></svg><svg class="w-3 h-2"><use href="#caret"/></svg></button>
      <button aria-label="Viewports" class="flex items-center gap-1"><svg class="size-8" viewBox="0 0 32 32"><path d="M2 4h28v24H2z" fill="#fff" stroke="#444" stroke-width="1"/><path d="M4 6h11v9H4zM18 6h11v9H18zM4 18h11v9H4zM18 18h11v9H18z" fill="#85b7de"/><path d="M16 4v24M2 16h28" stroke="#444" stroke-width="1"/></svg><svg class="w-3 h-2"><use href="#caret"/></svg></button>
    </div>
  </main>

  <footer class="h-[100px] shrink-0 bg-[#f1f3f2] flex flex-col">
    <div class="h-[6px] bg-[#ccc] flex items-end pl-[270px] pr-[90px]"><div class="flex-1 h-[2px] bg-[#ddd]"></div></div>
    <div class="h-[14px]"><div class="ml-[150px] w-[108px] h-[14px] rounded-b-md rounded-t-xs bg-[#ccc]"></div></div>
    <div class="flex-1 flex">
      <div class="w-[274px] shrink-0 flex items-center gap-[25px] pl-[21px] text-[#666664]">
        <button aria-label="Go to start"><svg class="w-6 h-8" viewBox="0 0 24 32" fill="currentColor"><path d="M1 4h4v24H1zM6 16L23 4v24z"/></svg></button>
        <button aria-label="Step back"><svg class="w-[26px] h-8" viewBox="0 0 26 32" fill="currentColor"><path d="M0 16L20 4v24zM22 12h4v10h-4z"/></svg></button>
        <button aria-label="Play"><svg class="w-[26px] h-8" viewBox="0 0 26 32" fill="currentColor"><path d="M2 1l23 15L2 31z"/></svg></button>
        <button aria-label="Step forward"><svg class="w-[26px] h-8" viewBox="0 0 26 32" fill="currentColor"><path d="M26 16L6 4v24zM0 12h4v10H0z"/></svg></button>
        <button aria-label="Go to end"><svg class="w-6 h-8" viewBox="0 0 24 32" fill="currentColor"><path d="M19 4h4v24h-4zM18 16L1 4v24z"/></svg></button>
      </div>
      <div class="w-[2660px] shrink-0 flex flex-col pt-4">
        <ol id="timeline" class="flex px-[10px]"></ol>
        <div class="flex gap-1 h-1">
          <span class="w-[6px] bg-[#ccc]"></span><span class="w-2 bg-[#ccc]"></span><span class="flex-1 bg-[#ccc]"></span><span class="w-2 bg-[#ccc]"></span><span class="w-[6px] bg-[#ccc]"></span>
        </div>
      </div>
      <button aria-label="Timeline settings" class="ml-8 text-[#78786f]"><svg class="size-[30px]" viewBox="0 0 30 30"><circle cx="15" cy="15" r="8" fill="none" stroke="currentColor" stroke-width="6"/><path d="M15 0v5M15 25v5M0 15h5M25 15h5M4 4l4 4M22 22l4 4M26 4l-4 4M8 22l-4 4" stroke="currentColor" stroke-width="5"/></svg></button>
    </div>
  </footer>
</div>

<script>
const groups = [
  ['CREATE', 'w-[620px]', ['sketch','extrude','revolve','hole','pattern','form','texture']],
  ['AUTOMATE', 'w-[198px]', ['automate']],
  ['MODIFY', 'w-[538px]', ['presspull','fillet','shell','combine','split','move']],
  ['ASSEMBLE', 'w-[280px]', ['component','joint','bom']],
  ['CONFIGURE', 'w-[206px]', ['config','config-table']],
  ['CONSTRUCT', 'w-[208px]', ['plane']],
  ['INSPECT', 'w-[158px]', ['measure']],
  ['INSERT', 'w-[194px]', ['bolt','picture']],
  ['SELECT', 'w-[150px]', ['select']],
];
document.getElementById('ribbon').innerHTML = groups.map(([name, width, icons], i) => `
  <section class="${width} shrink-0 h-[102px] ${i < groups.length - 1 ? 'border-r-2 border-[#ccc]' : ''}">
    <div class="h-[66px] flex items-center justify-center gap-[22px]">
      ${icons.map(n => `<button aria-label="${n}"><svg class="${n === 'select' ? 'size-[76px]' : 'size-16'}"><use href="#${n}"/></svg></button>`).join('')}
    </div>
    <div class="mt-[11px] flex justify-center ${icons.length > 4 ? 'pr-3' : 'pr-1'}"><button class="flex items-center gap-1 leading-6">${name}<svg class="w-3 h-2"><use href="#caret"/></svg></button></div>
  </section>`).join('');

const steps = [
  ...Array(8).fill(['plane','sketch-edit']).flat(), ...Array(7).fill('loft'),
  'sphere','sphere', ...Array(7).fill(['sphere','move']).flat(), 'sphere','move','move','sphere',
  'shell','split','sketch-edit','extrude','sketch-edit','extrude','move','sketch-edit','extrude','move','split','circular',
];
const marker = '<svg class="absolute -left-3 -top-3 w-6 h-16" viewBox="0 0 24 64"><path d="M0 0h24v9L14 18v46h-4V18L0 9z" fill="#666664"/></svg>';
document.getElementById('timeline').innerHTML = steps.map((n, i) => `
  <li class="relative w-12 shrink-0 flex flex-col items-center gap-[6px]">${i === 23 ? marker : ''}
    <svg class="size-8 ${i > 22 ? 'opacity-25' : ''}"><use href="#${n}"/></svg><span class="w-1 h-[10px] bg-[#ccc]"></span>
  </li>`).join('');
</script>
</body>
</html>
